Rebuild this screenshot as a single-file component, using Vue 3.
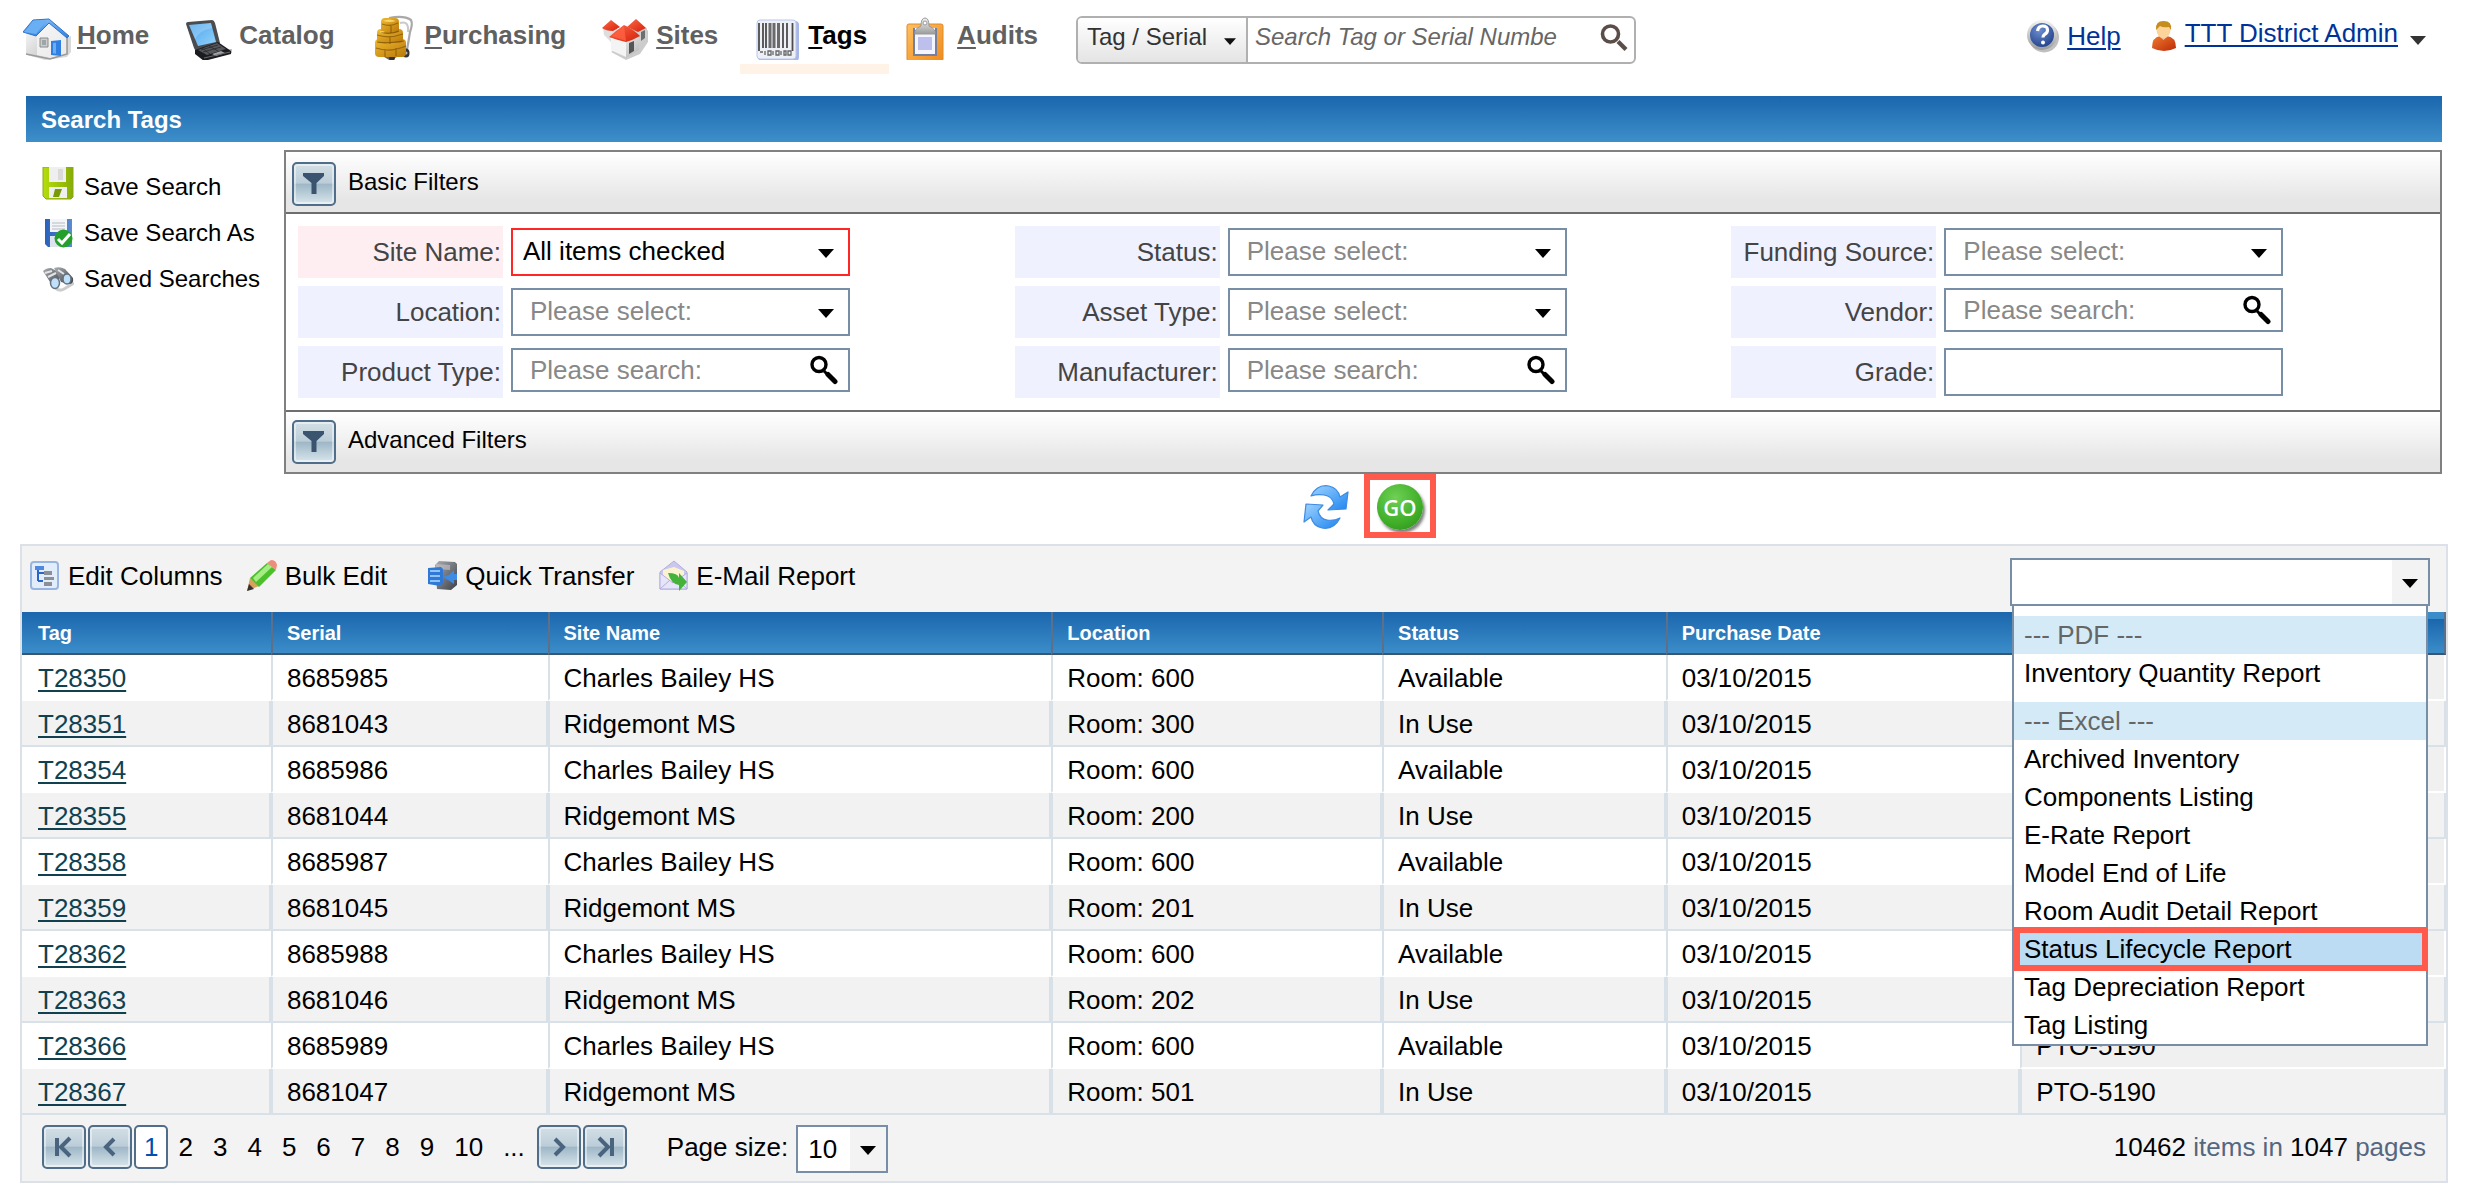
<script setup>
import { ref } from 'vue'

const navItems = [
  { key: 'H', rest: 'ome', icon: 'home' },
  { key: '', rest: 'Catalog', icon: 'laptop' },
  { key: 'P', rest: 'urchasing', icon: 'boxes' },
  { key: 'S', rest: 'ites', icon: 'sites' },
  { key: 'T', rest: 'ags', icon: 'barcode', active: true },
  { key: 'A', rest: 'udits', icon: 'clipboard' }
]

const savedLinks = [
  { text: 'Save Search', icon: 'save' },
  { text: 'Save Search As', icon: 'save-as' },
  { text: 'Saved Searches', icon: 'binoculars' }
]

const filters = [
  { id: 'site', label: 'Site Name:', type: 'select', text: 'All items checked', required: true },
  { id: 'status', label: 'Status:', type: 'select', text: 'Please select:' },
  { id: 'funding', label: 'Funding Source:', type: 'select', text: 'Please select:' },
  { id: 'location', label: 'Location:', type: 'select', text: 'Please select:' },
  { id: 'asset', label: 'Asset Type:', type: 'select', text: 'Please select:' },
  { id: 'vendor', label: 'Vendor:', type: 'search', text: 'Please search:' },
  { id: 'product', label: 'Product Type:', type: 'search', text: 'Please search:' },
  { id: 'manufacturer', label: 'Manufacturer:', type: 'search', text: 'Please search:' },
  { id: 'grade', label: 'Grade:', type: 'text', text: '' }
]

const tools = [
  { text: 'Edit Columns', icon: 'columns' },
  { text: 'Bulk Edit', icon: 'pencil' },
  { text: 'Quick Transfer', icon: 'transfer' },
  { text: 'E-Mail Report', icon: 'mail' }
]

const reports = [
  { text: '--- PDF ---', group: true },
  { text: 'Inventory Quantity Report' },
  { text: '--- Excel ---', group: true },
  { text: 'Archived Inventory' },
  { text: 'Components Listing' },
  { text: 'E-Rate Report' },
  { text: 'Model End of Life' },
  { text: 'Room Audit Detail Report' },
  { text: 'Status Lifecycle Report' },
  { text: 'Tag Depreciation Report' },
  { text: 'Tag Listing' }
]

const columns = ['Tag', 'Serial', 'Site Name', 'Location', 'Status', 'Purchase Date', '']

const rows = [
  ['T28350', '8685985', 'Charles Bailey HS', 'Room: 600', 'Available', '03/10/2015', ''],
  ['T28351', '8681043', 'Ridgemont MS', 'Room: 300', 'In Use', '03/10/2015', ''],
  ['T28354', '8685986', 'Charles Bailey HS', 'Room: 600', 'Available', '03/10/2015', ''],
  ['T28355', '8681044', 'Ridgemont MS', 'Room: 200', 'In Use', '03/10/2015', ''],
  ['T28358', '8685987', 'Charles Bailey HS', 'Room: 600', 'Available', '03/10/2015', ''],
  ['T28359', '8681045', 'Ridgemont MS', 'Room: 201', 'In Use', '03/10/2015', ''],
  ['T28362', '8685988', 'Charles Bailey HS', 'Room: 600', 'Available', '03/10/2015', ''],
  ['T28363', '8681046', 'Ridgemont MS', 'Room: 202', 'In Use', '03/10/2015', ''],
  ['T28366', '8685989', 'Charles Bailey HS', 'Room: 600', 'Available', '03/10/2015', 'PTO-5190'],
  ['T28367', '8681047', 'Ridgemont MS', 'Room: 501', 'In Use', '03/10/2015', 'PTO-5190']
]

const pages = ['1', '2', '3', '4', '5', '6', '7', '8', '9', '10', '...']
const page = ref('1')
const selectedReport = ref('Status Lifecycle Report')
</script>

<template>
  <!-- icon sprite -->
  <svg class="sprite" width="0" height="0" aria-hidden="true">
    <defs>
      <linearGradient id="g-roof" x1="0" y1="0" x2="0" y2="1">
        <stop offset="0" stop-color="#7db9f5" /><stop offset="1" stop-color="#2f7fe0" />
      </linearGradient>
      <linearGradient id="g-wall" x1="0" y1="0" x2="1" y2="1">
        <stop offset="0" stop-color="#ffffff" /><stop offset="1" stop-color="#b4b4b4" />
      </linearGradient>
      <linearGradient id="g-screen" x1="0" y1="0" x2="1" y2="1">
        <stop offset="0" stop-color="#4aa4ec" /><stop offset="1" stop-color="#93d2fb" />
      </linearGradient>
      <linearGradient id="g-gold" x1="0" y1="0" x2="1" y2="1">
        <stop offset="0" stop-color="#f0b92e" /><stop offset="1" stop-color="#b8790a" />
      </linearGradient>
      <linearGradient id="g-board" x1="0" y1="0" x2="1" y2="1">
        <stop offset="0" stop-color="#ffc061" /><stop offset="1" stop-color="#f08a1c" />
      </linearGradient>
      <linearGradient id="g-metal" x1="0" y1="0" x2="0" y2="1">
        <stop offset="0" stop-color="#f4f4f4" /><stop offset="1" stop-color="#9b9b9b" />
      </linearGradient>
      <linearGradient id="g-blue" x1="0" y1="0" x2="1" y2="1">
        <stop offset="0" stop-color="#9fd3ff" /><stop offset="1" stop-color="#1f86f0" />
      </linearGradient>
      <radialGradient id="g-help" cx=".4" cy=".3" r=".8">
        <stop offset="0" stop-color="#6d8fd0" /><stop offset="1" stop-color="#1d3c86" />
      </radialGradient>
      <linearGradient id="g-shirt" x1="0" y1="0" x2="1" y2="1">
        <stop offset="0" stop-color="#f07a2c" /><stop offset="1" stop-color="#bb2a08" />
      </linearGradient>
      <linearGradient id="g-lime" x1="0" y1="0" x2="1" y2="0">
        <stop offset="0" stop-color="#b6dd0c" /><stop offset="1" stop-color="#86ad05" />
      </linearGradient>
      <linearGradient id="g-navy" x1="0" y1="0" x2="1" y2="0">
        <stop offset="0" stop-color="#2a62ba" /><stop offset="1" stop-color="#5b8bd0" />
      </linearGradient>
      <linearGradient id="g-red" x1="0" y1="0" x2="1" y2="1">
        <stop offset="0" stop-color="#ff6a48" /><stop offset="1" stop-color="#d4200a" />
      </linearGradient>
      <linearGradient id="g-dark" x1="0" y1="0" x2="1" y2="1">
        <stop offset="0" stop-color="#a9adb2" /><stop offset="1" stop-color="#3d4046" />
      </linearGradient>
    </defs>

    <symbol id="i-home" viewBox="0 0 48 50">
      <path d="M4 45l18 5 22-3 4-5V26l-4 2z" fill="#000" opacity=".15" />
      <path d="M3 22l10 3L26 11l19 15v18l-17 5-25-5z" fill="url(#g-wall)" />
      <path d="M14 26L26 11l18 15v18l-17 4-13-3z" fill="#f6f6f6" opacity=".8" />
      <path d="M3 44l24 5 17-5V27" fill="none" stroke="#9a9a9a" stroke-width="1.500" />
      <path d="M0 22L10 10l16-1 20 17-2 2-18-15-13 13z" fill="url(#g-roof)" stroke="#2d73cf" stroke-width="1" />
      <path d="M1 22l10-11 13-1-11 14z" fill="#69aff3" />
      <path d="M17 28h8v9h-8z" fill="#c9cdd0" stroke="#8a8a8a" />
      <path d="M19 30h4v5h-4z" fill="#9ea4a8" />
      <path d="M28 31l10-1v16l-10-1z" fill="#2f80e2" />
      <path d="M30 33l3-.3v11l-3-.4z" fill="#6cacf3" />
    </symbol>

    <symbol id="i-laptop" viewBox="0 0 48 50">
      <path d="M12 42l10 8 25-7v-4z" fill="#000" opacity=".25" />
      <path d="M1 14q0-2 2-2l24-2q2 0 3 3l5 20-22 8q-3 0-4-3z" fill="#4a4c50" />
      <path d="M4 15l22-2 5 19-18 4z" fill="url(#g-screen)" />
      <path d="M4 15l22-2 1 5q-12 2-17 11z" fill="#fff" opacity=".2" />
      <path d="M10 40l23-8 13 9v3l-27 7-9-7z" fill="#1b1c1f" />
      <path d="M13 40l19-7 9 6-19 6z" fill="#55575b" />
      <path d="M16 40l17-5M18 42l18-5M17 38l8 6M24 36l9 5" stroke="#292a2c" stroke-width=".8" />
      <path d="M27 44l9-3 4 2-9 3z" fill="#a1a1a5" />
      <path d="M19 48l26-6" stroke="#68686b" />
    </symbol>

    <symbol id="i-boxes" viewBox="0 0 48 50">
      <path d="M18 8q15-3 22 2 2 4-1 12l-3 18" fill="none" stroke="#a9a9a9" stroke-width="2.200" />
      <path d="M29 13q9-3 8 9" fill="none" stroke="#c9c9c9" stroke-width="2" />
      <path d="M9 43l10 6 18-9" fill="none" stroke="#666" stroke-width="2.600" />
      <ellipse cx="21" cy="48" rx="3" ry="2.500" fill="#333" /><ellipse cx="35" cy="43" rx="3.500" ry="4.500" fill="#333" /><circle cx="35" cy="43" r="1.500" fill="#bbb" />
      <rect x="4" y="29" width="31" height="18" rx="4" fill="url(#g-gold)" />
      <rect x="6" y="19" width="26" height="14" rx="4" fill="url(#g-gold)" />
      <rect x="10" y="8" width="18" height="15" rx="4" fill="url(#g-gold)" />
      <path d="M11 14q8 3 16-1M20 15v8M6 25q12 4 26-1M19 26v8M5 38q14 5 30-2M14 39v8M25 38v8" fill="none" stroke="#805406" stroke-width="1.200" opacity=".7" />
      <path d="M6 32q8 2 27-1M10 22q8 3 18-1" fill="none" stroke="#6d4705" stroke-width="1.200" opacity=".7" />
      <path d="M12 11q6-3 13 0-6 2-13 0zM8 22q3-2 6 0-3 1-6 0z" fill="#ffe07c" opacity=".8" />
    </symbol>

    <symbol id="i-sites" viewBox="0 0 48 50">
      <path d="M9 42l15 8 14-6 8-12V20l-4 2z" fill="#000" opacity=".2" />
      <path d="M1 18h14v10l-6 4-7-7z" fill="#dedede" />
      <path d="M29 18h16v10l-8 6-8-8z" fill="#cfcfcf" />
      <path d="M0 18l9-8 9 7-7 4q-7 0-11-3z" fill="url(#g-red)" />
      <path d="M25 17l9-8 10 9-8 4z" fill="url(#g-red)" />
      <path d="M39 22l4-2v8l-4 3z" fill="#6e6e6e" />
      <path d="M9 26l15 5 13-6v15l-13 8-15-8z" fill="url(#g-wall)" />
      <path d="M9 26l15 5v16L9 40z" fill="#f4f4f4" />
      <path d="M7 27q8-7 15-12 9 4 16 11-7 4-14 6-9-2-17-5z" fill="url(#g-red)" />
      <path d="M22 16l2 15-15-5z" fill="#ff6242" opacity=".8" />
      <path d="M27 33l5-2v10l-5 3z" fill="#555" />
    </symbol>

    <symbol id="i-barcode" viewBox="0 0 48 50">
      <rect x="4" y="11" width="41" height="40" rx="4" fill="#a9b7e6" />
      <rect x="3" y="10" width="39" height="39" rx="3" fill="#eef0f6" stroke="#b7c8ee" />
      <path d="M5 13v28M9 13v25M12 13v25M29 13v25M33 13v25M38.500 13v28" stroke="#4c4c4c" stroke-width="1.800" />
      <path d="M16 13v25M20 13v25M24.500 13v25" stroke="#6a6a6a" stroke-width="3" />
      <path d="M6 42h3M11 41v4M14 41h3v4h-3zM19 41v4M22 41h3v4h-3zM27 41v4M30 41h2v4h-2zM34 41h3v4h-3z" fill="none" stroke="#666" stroke-width="1.300" />
    </symbol>

    <symbol id="i-clipboard" viewBox="0 0 48 50">
      <rect x="4" y="14" width="36" height="37" rx="2" fill="url(#g-board)" stroke="#e08a26" />
      <path d="M10 18h24v28H10z" fill="#74809f" />
      <path d="M12 18h20v26H12z" fill="#f4f5ff" />
      <path d="M15 27h14v13H15z" fill="#bdc0ec" />
      <path d="M12 24q-1-5 6-8 0-8 4-8t4 8q7 3 6 8z" fill="url(#g-metal)" stroke="#9a9a9a" />
      <circle cx="22" cy="13" r="2" fill="#fff" stroke="#999" />
    </symbol>

    <symbol id="i-save" viewBox="0 0 32 40">
      <path d="M1 0h30v30l-2 2H4l-3-3z" fill="url(#g-lime)" stroke="#8aa81c" />
      <path d="M7 0h17v15H7z" fill="#efefef" />
      <path d="M16 2h5v11h-5z" fill="#dadada" />
      <path d="M7 20h18v11H7z" fill="#efefef" />
      <path d="M13 22h7l-3 8h-6z" fill="#789a08" />
    </symbol>

    <symbol id="i-save-as" viewBox="0 0 32 40">
      <path d="M3 6h27v28H6l-3-3z" fill="url(#g-navy)" />
      <path d="M8 6h17v13H8z" fill="#f3f5f8" />
      <path d="M10 10h13M10 13h13M10 16h13" stroke="#b7bcc4" />
      <path d="M8 23h12v11H8z" fill="#dde4ee" />
      <circle cx="21.500" cy="25.500" r="9" fill="#23a02c" />
      <path d="M16 26l4 4 8-9" fill="none" stroke="#fff" stroke-width="3" />
    </symbol>

    <symbol id="i-binoculars" viewBox="0 0 32 40">
      <path d="M12 28q5 5 10 2l10-6" fill="none" stroke="#000" stroke-width="3" opacity=".2" />
      <path d="M1 12q3-3 8-3l9 5-2 15q-6 0-8-6z" fill="url(#g-dark)" />
      <path d="M12 9q6-2 11 1l8 9q1 6-4 6l-8-2z" fill="url(#g-dark)" />
      <path d="M3 14l7-2M6 18l8-4M16 11l6 4" stroke="#e3e4e6" stroke-width="2" />
      <ellipse cx="13" cy="24" rx="4.500" ry="5.500" fill="#bfe0fb" stroke="#65717d" stroke-width="1.500" />
      <ellipse cx="25" cy="20" rx="4" ry="5" fill="#bfe0fb" stroke="#65717d" stroke-width="1.500" />
    </symbol>

    <symbol id="i-help" viewBox="0 0 34 34">
      <circle cx="18" cy="18.500" r="15" fill="#000" opacity=".25" />
      <circle cx="16" cy="16" r="15" fill="url(#g-metal)" />
      <circle cx="16" cy="16" r="12" fill="url(#g-help)" />
      <path d="M11.500 12q1-5 5-5 5 0 5 4 0 3-3 4.500-1.500 1-1.500 3" fill="none" stroke="#fff" stroke-width="3.200" />
      <circle cx="17" cy="23.500" r="2" fill="#fff" />
    </symbol>

    <symbol id="i-user" viewBox="0 0 26 32">
      <path d="M1 28q0-11 8-12h7q9 1 9 12-12 6-24 0z" fill="url(#g-shirt)" />
      <path d="M8 16l4.500 4 4.500-4z" fill="#fff" opacity=".6" />
      <ellipse cx="12.500" cy="10" rx="7" ry="8" fill="#fcd49a" />
      <path d="M5 10q-1-9 7.500-9 9 0 7.500 9l-2-3q-6 1-9-1l-3 3z" fill="#c58d1c" />
    </symbol>

    <symbol id="i-search" viewBox="0 0 30 30">
      <circle cx="10" cy="9.500" r="7" fill="none" stroke="currentColor" stroke-width="3.400" />
      <path d="M15 16l4 4" stroke="currentColor" stroke-width="3" />
      <path d="M19 19.500l7 7" stroke="currentColor" stroke-width="5" stroke-linecap="round" />
    </symbol>

    <symbol id="i-find" viewBox="0 0 28 28">
      <circle cx="10.500" cy="11" r="8" fill="none" stroke="currentColor" stroke-width="3.600" />
      <path d="M18 18.500l8 8" stroke="currentColor" stroke-width="4.200" />
    </symbol>

    <symbol id="i-caret" viewBox="0 0 16 10">
      <path d="M0 0h16L8 9z" fill="currentColor" />
    </symbol>

    <symbol id="i-funnel" viewBox="0 0 24 24">
      <path d="M1 1h21v3l-7.500 7v11h-5V11L1 4z" fill="#3a536e" />
    </symbol>

    <symbol id="i-refresh" viewBox="0 0 46 46">
      <path d="M8 12Q14 0 26 2q9 2 11 11l8-5-2 17-18 1 6-6q-2-8-10-9-7-1-13 1z" fill="url(#g-blue)" stroke="#3d8be4" stroke-width="1.200" stroke-linejoin="round" />
      <path d="M37 34q-6 12-18 10-9-2-11-11l-7 5 2-18 17 1-5 6q2 8 9 9 7 1 13-2z" fill="url(#g-blue)" stroke="#3d8be4" stroke-width="1.200" stroke-linejoin="round" />
    </symbol>

    <symbol id="i-columns" viewBox="0 0 32 32">
      <rect x="1" y="2" width="27" height="27" rx="3" fill="#e2edfc" stroke="#98b5e2" stroke-width="2" />
      <path d="M5 8h7M8 8v13M8 13h7M8 21h5" fill="none" stroke="#2a66c8" stroke-width="2" />
      <path d="M5 6h9v4H5z" fill="#4f88df" />
      <path d="M14 11h8v4h-8zM14 17h10v3H14zM14 22h8v4h-8z" fill="#8b8f96" />
    </symbol>

    <symbol id="i-pencil" viewBox="0 0 32 32">
      <path d="M0 31l3-13 9 8z" fill="#d9a05e" />
      <path d="M0 31l2-7 5 5z" fill="#333" />
      <path d="M3 18L20 3l9 7-17 17z" fill="#4cc02c" />
      <path d="M6 18L21 4l4 3L9 22z" fill="#a6ec84" />
      <path d="M20 3l4-3q5 0 6 5l-1 5z" fill="#ef8d7c" />
    </symbol>

    <symbol id="i-transfer" viewBox="0 0 32 32">
      <path d="M8 5l4-4 16 1 2 2v21l-6 5-14-1z" fill="url(#g-dark)" />
      <path d="M9 4l14 1v5L9 9z" fill="#c5c8cc" opacity=".6" />
      <path d="M1 8l13-1 2 2v14l-3 3-12-2z" fill="#2f78d6" />
      <path d="M3 11h10M3 16h10M3 21h10" stroke="#8fc2f8" stroke-width="2" />
      <path d="M16 17l6-2 5-5v4h3v6h-3v4l-6-4z" fill="#3d8be4" />
    </symbol>

    <symbol id="i-mail" viewBox="0 0 32 32">
      <path d="M2 12L16 1l13 11v17H2z" fill="#cbc7ef" stroke="#b3aede" />
      <path d="M5 10l11-3 10 4v11H5z" fill="#fbf3cf" />
      <path d="M2 13l13 10 14-10v16H2z" fill="#e6e5fa" stroke="#b3aede" />
      <path d="M2 29l10-9M29 29l-10-9" stroke="#b3aede" />
      <path d="M10 13q10 0 11 5v-5l8 9-8 9v-6q-8-1-11-12z" fill="#45b23a" />
    </symbol>
  </svg>

  <div class="page">
    <header class="top">
      <nav class="nav">
        <a v-for="item in navItems" :key="item.icon" href="#" class="nav-item" :class="{ active: item.active }">
          <svg class="nav-icon"><use :href="'#i-' + item.icon" /></svg>
          <span><u v-if="item.key">{{ item.key }}</u>{{ item.rest }}</span>
        </a>
      </nav>

      <form class="quick-search" @submit.prevent>
        <div class="quick-type">
          <select aria-label="Search by">
            <option>Tag / Serial</option>
          </select>
          <svg class="caret"><use href="#i-caret" /></svg>
        </div>
        <input type="text" aria-label="Search" placeholder="Search Tag or Serial Numbe" />
        <button type="submit" aria-label="Search">
          <svg class="find"><use href="#i-find" /></svg>
        </button>
      </form>

      <div class="account">
        <svg class="help-icon"><use href="#i-help" /></svg>
        <a href="#" class="help-link">Help</a>
        <svg class="user-icon"><use href="#i-user" /></svg>
        <a href="#" class="user-link">TTT District Admin</a>
        <svg class="caret"><use href="#i-caret" /></svg>
      </div>
    </header>

    <h1 class="title">Search Tags</h1>

    <div class="search-area">
      <aside class="saved">
        <a v-for="link in savedLinks" :key="link.icon" href="#">
          <svg><use :href="'#i-' + link.icon" /></svg>
          <span>{{ link.text }}</span>
        </a>
      </aside>

      <main class="search-main">
        <section class="filters">
          <div class="filter-head">
            <button type="button" class="glossy" aria-label="Toggle basic filters">
              <svg class="funnel"><use href="#i-funnel" /></svg>
            </button>
            <span>Basic Filters</span>
          </div>
          <div class="filter-grid">
            <div v-for="f in filters" :key="f.id" class="field" :class="{ required: f.required }">
              <label :for="f.id">{{ f.label }}</label>
              <div class="control" :class="f.type">
                <template v-if="f.type === 'select'">
                  <select :id="f.id">
                    <option>{{ f.text }}</option>
                  </select>
                  <svg class="caret"><use href="#i-caret" /></svg>
                </template>
                <template v-else>
                  <input :id="f.id" type="text" :placeholder="f.text" />
                  <button v-if="f.type === 'search'" type="button" :aria-label="f.label">
                    <svg class="glass"><use href="#i-search" /></svg>
                  </button>
                </template>
              </div>
            </div>
          </div>
          <div class="filter-head advanced">
            <button type="button" class="glossy" aria-label="Toggle advanced filters">
              <svg class="funnel"><use href="#i-funnel" /></svg>
            </button>
            <span>Advanced Filters</span>
          </div>
        </section>

        <div class="actions">
          <button type="button" class="refresh" aria-label="Reset">
            <svg><use href="#i-refresh" /></svg>
          </button>
          <button type="button" class="go">GO</button>
        </div>
      </main>
    </div>

    <section class="grid">
      <div class="toolbar">
        <div class="tools">
          <a v-for="tool in tools" :key="tool.icon" href="#" :class="tool.icon">
            <svg><use :href="'#i-' + tool.icon" /></svg>
            <span>{{ tool.text }}</span>
          </a>
        </div>
        <div class="report-box">
          <input type="text" aria-label="Report" />
          <button type="button" aria-label="Open reports">
            <svg class="caret"><use href="#i-caret" /></svg>
          </button>
          <ul class="report-list">
            <li
              v-for="r in reports"
              :key="r.text"
              :class="{ group: r.group, selected: r.text === selectedReport }"
              @click="!r.group && (selectedReport = r.text)"
            >
              {{ r.text }}
            </li>
          </ul>
        </div>
      </div>

      <table>
        <thead>
          <tr>
            <th v-for="col in columns" :key="col">{{ col }}</th>
          </tr>
        </thead>
        <tbody>
          <tr v-for="row in rows" :key="row[0]">
            <td v-for="(cell, idx) in row" :key="idx">
              <a v-if="idx === 0" href="#">{{ cell }}</a>
              <template v-else>{{ cell }}</template>
            </td>
          </tr>
        </tbody>
      </table>

      <footer class="pager">
        <button type="button" class="glossy" aria-label="First page">
          <svg viewBox="0 0 24 24"><path d="M5 3v18M18 3l-9 9 9 9" /></svg>
        </button>
        <button type="button" class="glossy" aria-label="Previous page">
          <svg viewBox="0 0 24 24"><path d="M16 4l-8 8 8 8" /></svg>
        </button>
        <div class="pages">
          <a v-for="p in pages" :key="p" href="#" :class="{ current: p === page }" @click.prevent="page = p">{{ p }}</a>
        </div>
        <button type="button" class="glossy" aria-label="Next page">
          <svg viewBox="0 0 24 24"><path d="M8 4l8 8-8 8" /></svg>
        </button>
        <button type="button" class="glossy" aria-label="Last page">
          <svg viewBox="0 0 24 24"><path d="M19 3v18M6 3l9 9-9 9" /></svg>
        </button>
        <label for="page-size">Page size:</label>
        <div class="size-box">
          <select id="page-size">
            <option>10</option>
          </select>
          <svg class="caret"><use href="#i-caret" /></svg>
        </div>
        <p class="summary"><b>10462</b> items in <b>1047</b> pages</p>
      </footer>
    </section>
  </div>
</template>

<style>
body {
  margin: 0;
  background: #fff;
}
</style>

<style scoped>
.page {
  font-family: "Liberation Sans", Arial, Helvetica, sans-serif;
  font-size: 26px;
  color: #000;
}

.page *,
.page *::after {
  box-sizing: border-box;
}

.sprite {
  position: absolute;
}

a {
  color: inherit;
  text-decoration: none;
}

svg {
  display: block;
  flex: none;
}

button,
input,
select {
  font: inherit;
  color: inherit;
  margin: 0;
  padding: 0;
  border: 0;
  border-radius: 0;
  background: none;
  outline: none;
  appearance: none;
}

.caret {
  width: 16px;
  height: 10px;
  pointer-events: none;
}

.glass {
  width: 30px;
  height: 30px;
}

/* top bar */
.top {
  display: flex;
  align-items: flex-start;
  height: 96px;
  padding: 0 40px 0 9px;
}

.nav {
  display: flex;
}

.nav-item {
  display: flex;
  align-items: center;
  gap: 6px;
  padding: 10px 22px 4px 14px;
  border-bottom: 10px solid transparent;
  font-weight: bold;
  color: #606060;
}

.nav-item.active {
  color: #000;
  border-bottom-color: #fff2e6;
}

.nav-item u {
  text-decoration-thickness: 2px;
  text-underline-offset: 3px;
}

.nav-icon {
  width: 48px;
  height: 50px;
}

.quick-search {
  display: flex;
  width: 560px;
  height: 48px;
  margin: 16px 0 0 16px;
  border: 2px solid #b0b0b0;
  border-radius: 6px;
  font-size: 24px;
}

.quick-type {
  display: flex;
  align-items: center;
  width: 170px;
  border-right: 2px solid #b0b0b0;
  border-radius: 4px 0 0 4px;
  background: linear-gradient(#fff, #e4e4e4);
  color: #333;
}

.quick-type select {
  width: 100%;
  height: 100%;
  padding: 0 0 7px 9px;
}

.quick-type .caret {
  width: 12px;
  height: 8px;
  margin: 4px 10px 0 -22px;
  color: #111;
}

.quick-search input {
  flex: 1;
  min-width: 0;
  padding: 0 0 6px 7px;
  font-style: italic;
}

.quick-search input::placeholder {
  color: #666;
  opacity: 1;
}

.quick-search button {
  width: 34px;
  padding-bottom: 6px;
  color: #5b4e4a;
}

.find {
  width: 28px;
  height: 28px;
}

.account {
  display: flex;
  align-items: center;
  margin: 19px 0 0 auto;
  height: 34px;
}

.account a {
  color: #003399;
  text-decoration: underline;
  text-decoration-thickness: 2px;
  text-underline-offset: 3px;
}

.help-icon {
  width: 34px;
  height: 34px;
}

.help-link {
  margin: 0 30px 0 7px;
}

.user-icon {
  width: 26px;
  height: 32px;
}

.user-link {
  margin: 0 12px 6px 8px;
}

.account .caret {
  margin-top: 10px;
  color: #333;
}

/* title and saved searches */
.title {
  margin: 0 24px 8px 26px;
  padding: 2px 0 0 15px;
  background: linear-gradient(#1b66ad, #3d8fca);
  color: #fff;
  font-size: 24px;
  line-height: 44px;
}

.search-area {
  display: flex;
  margin: 0 24px 0 26px;
}

.saved {
  width: 258px;
  padding: 14px 0 0 16px;
  font-size: 24px;
}

.saved a {
  display: flex;
  align-items: center;
  gap: 10px;
  height: 46px;
  white-space: nowrap;
}

.saved svg {
  width: 32px;
  height: 40px;
}

/* filters */
.search-main {
  flex: 1;
  min-width: 0;
}

.filters {
  border: 2px solid #808080;
}

.filter-head {
  display: flex;
  gap: 12px;
  height: 60px;
  padding: 10px 6px 0;
  background: linear-gradient(#fff, #e6e6e6 80%);
  font-size: 24px;
  line-height: 40px;
}

.advanced {
  padding-top: 8px;
}

.glossy {
  display: flex;
  align-items: center;
  justify-content: center;
  width: 44px;
  height: 44px;
  border: 2px solid #506d89;
  border-radius: 5px;
  box-shadow: inset 0 0 0 2px rgba(255, 255, 255, 0.45);
  background: linear-gradient(#d3dfe6, #bccdd8 48%, #9db6c6 50%, #d9e6ec);
}

.funnel {
  width: 24px;
  height: 24px;
}

.filter-grid {
  display: grid;
  grid-template-columns: repeat(3, 1fr);
  gap: 8px;
  padding: 12px 0 12px 12px;
  border-top: 2px solid #6e6e6e;
  border-bottom: 2px solid #6e6e6e;
}

.field {
  display: flex;
  align-items: flex-start;
  gap: 8px;
}

.field label {
  width: 205px;
  padding-right: 2px;
  background: #f0f1ff;
  color: #444;
  line-height: 52px;
  text-align: right;
}

.field.required label {
  background: #ffeef1;
}

.control {
  display: flex;
  align-items: center;
  width: 339px;
  height: 48px;
  margin-top: 2px;
  border: 2px solid #788da6;
}

.control.search {
  height: 44px;
}

.control select,
.control input {
  flex: 1;
  width: 100%;
  min-width: 0;
  height: 100%;
  padding: 0 0 2px 17px;
  color: #888;
}

.control.search input {
  padding-bottom: 0;
}

.control input::placeholder {
  color: #888;
  opacity: 1;
}

.control .caret {
  margin: 3px 14px 0 -30px;
}

.control .glass {
  margin-right: 9px;
}

.required .control {
  border-color: #ff2626;
}

.required .control select {
  padding-left: 10px;
  color: #000;
}

.actions {
  display: flex;
  justify-content: center;
  gap: 28px;
  padding: 10px 0 14px;
}

.refresh svg {
  width: 46px;
  height: 46px;
}

.go {
  position: relative;
  width: 46px;
  height: 46px;
  border-radius: 50%;
  background: radial-gradient(circle at 40% 30%, #6fd055, #3fae28 60%, #2b8a18);
  box-shadow: 2px 3px 3px rgba(0, 0, 0, 0.5);
  color: #fff;
  font-family: "Open Sans", sans-serif;
  font-size: 22px;
  font-weight: 600;
}

.go::after {
  content: "";
  position: absolute;
  inset: -10px -13px -8px;
  border: 6px solid #ff5a4c;
}

/* results grid */
.grid {
  margin: 0 18px 0 20px;
  border: 2px solid #dbe1e7;
  background: #f3f3f3;
}

.toolbar {
  display: flex;
  justify-content: space-between;
  padding: 12px 16px 6px 8px;
}

.tools {
  display: flex;
  align-items: center;
  gap: 24px;
  padding-bottom: 12px;
}

.tools a {
  display: flex;
  align-items: center;
  gap: 6px;
}

.tools .pencil {
  margin-right: 16px;
}

.tools svg {
  width: 32px;
  height: 32px;
}

.report-box {
  position: relative;
  display: flex;
  width: 420px;
  height: 48px;
  border: 2px solid #788da6;
  background: #fff;
}

.report-box input {
  flex: 1;
  min-width: 0;
  padding-left: 10px;
}

.report-box button {
  display: flex;
  align-items: center;
  justify-content: center;
  width: 36px;
  padding-top: 4px;
  background: #f3f3f3;
}

.report-list {
  position: absolute;
  top: 44px;
  left: 0;
  right: 0;
  z-index: 1;
  margin: 0;
  padding: 2px 0 0;
  border: 2px solid #788da6;
  background: #fff;
  list-style: none;
}

.report-list li {
  padding-left: 10px;
  line-height: 38px;
  cursor: pointer;
}

.report-list .group {
  margin-top: 10px;
  background: #d4ebf7;
  color: #666;
}

.report-list .group:first-child {
  margin-top: 8px;
}

.report-list .selected {
  position: relative;
  background: #bcdcf4;
}

.report-list .selected::after {
  content: "";
  position: absolute;
  inset: -3px -2px -3px 0;
  border: 6px solid #ff5a4c;
}

table {
  width: 100%;
  table-layout: fixed;
  border-collapse: separate;
  border-spacing: 0;
}

th {
  padding: 2px 0 0 14px;
  border-left: 2px solid #5d7087;
  border-bottom: 2px solid #3b556f;
  background: linear-gradient(#1b66ad, #3b8dc9);
  color: #fff;
  font-size: 20px;
  line-height: 39px;
  text-align: left;
}

th:nth-child(1) { width: 10.27%; }
th:nth-child(2) { width: 11.41%; }
th:nth-child(3) { width: 20.78%; }
th:nth-child(4) { width: 13.65%; }
th:nth-child(5) { width: 11.7%; }
th:nth-child(6) { width: 14.63%; }

th:first-child {
  padding-left: 16px;
  border-left: 0;
}

th:last-child {
  border-right: 2px solid #5d7087;
  background: linear-gradient(#3b8dc9 7px, #1b66ad 7px, #3b8dc9);
}

td {
  padding: 2px 0 0 14px;
  border: 2px solid #fff;
  border-top: 0;
  border-left-color: #d9e1e8;
  background: #fff;
  line-height: 42px;
}

td:first-child {
  padding-left: 16px;
  border-left: 0;
}

td:last-child {
  background: #f0f0f0;
}

tr:nth-child(even) td {
  border-color: #d9e1e8;
  background: #f2f2f2;
}

td a {
  color: #11414f;
  text-decoration: underline;
  text-decoration-thickness: 2px;
  text-underline-offset: 3px;
}

/* pager */
.pager {
  display: flex;
  gap: 2px;
  padding: 10px 20px 8px 20px;
  line-height: 44px;
}

.pager .glossy svg {
  width: 24px;
  height: 24px;
  fill: none;
  stroke: #4a647f;
  stroke-width: 4;
}

.pages {
  display: flex;
}

.pages a {
  height: 44px;
  padding: 0 10px;
}

.pages .current {
  padding: 0 8px;
  border: 2px solid #506d89;
  border-radius: 5px;
  background: #fff;
  color: #0050b0;
  line-height: 40px;
}

.pager label {
  margin: 0 6px 0 38px;
}

.size-box {
  display: flex;
  align-items: center;
  width: 92px;
  height: 48px;
  border: 2px solid #788da6;
  background: linear-gradient(to right, #fff 52px, #f3f3f3 52px);
}

.size-box select {
  width: 100%;
  height: 100%;
  padding: 0 0 5px 10px;
}

.size-box .caret {
  margin: 3px 10px 0 -26px;
}

.summary {
  margin: 0 0 0 auto;
  color: #55677f;
}

.summary b {
  font-weight: normal;
  color: #000;
}
</style>
